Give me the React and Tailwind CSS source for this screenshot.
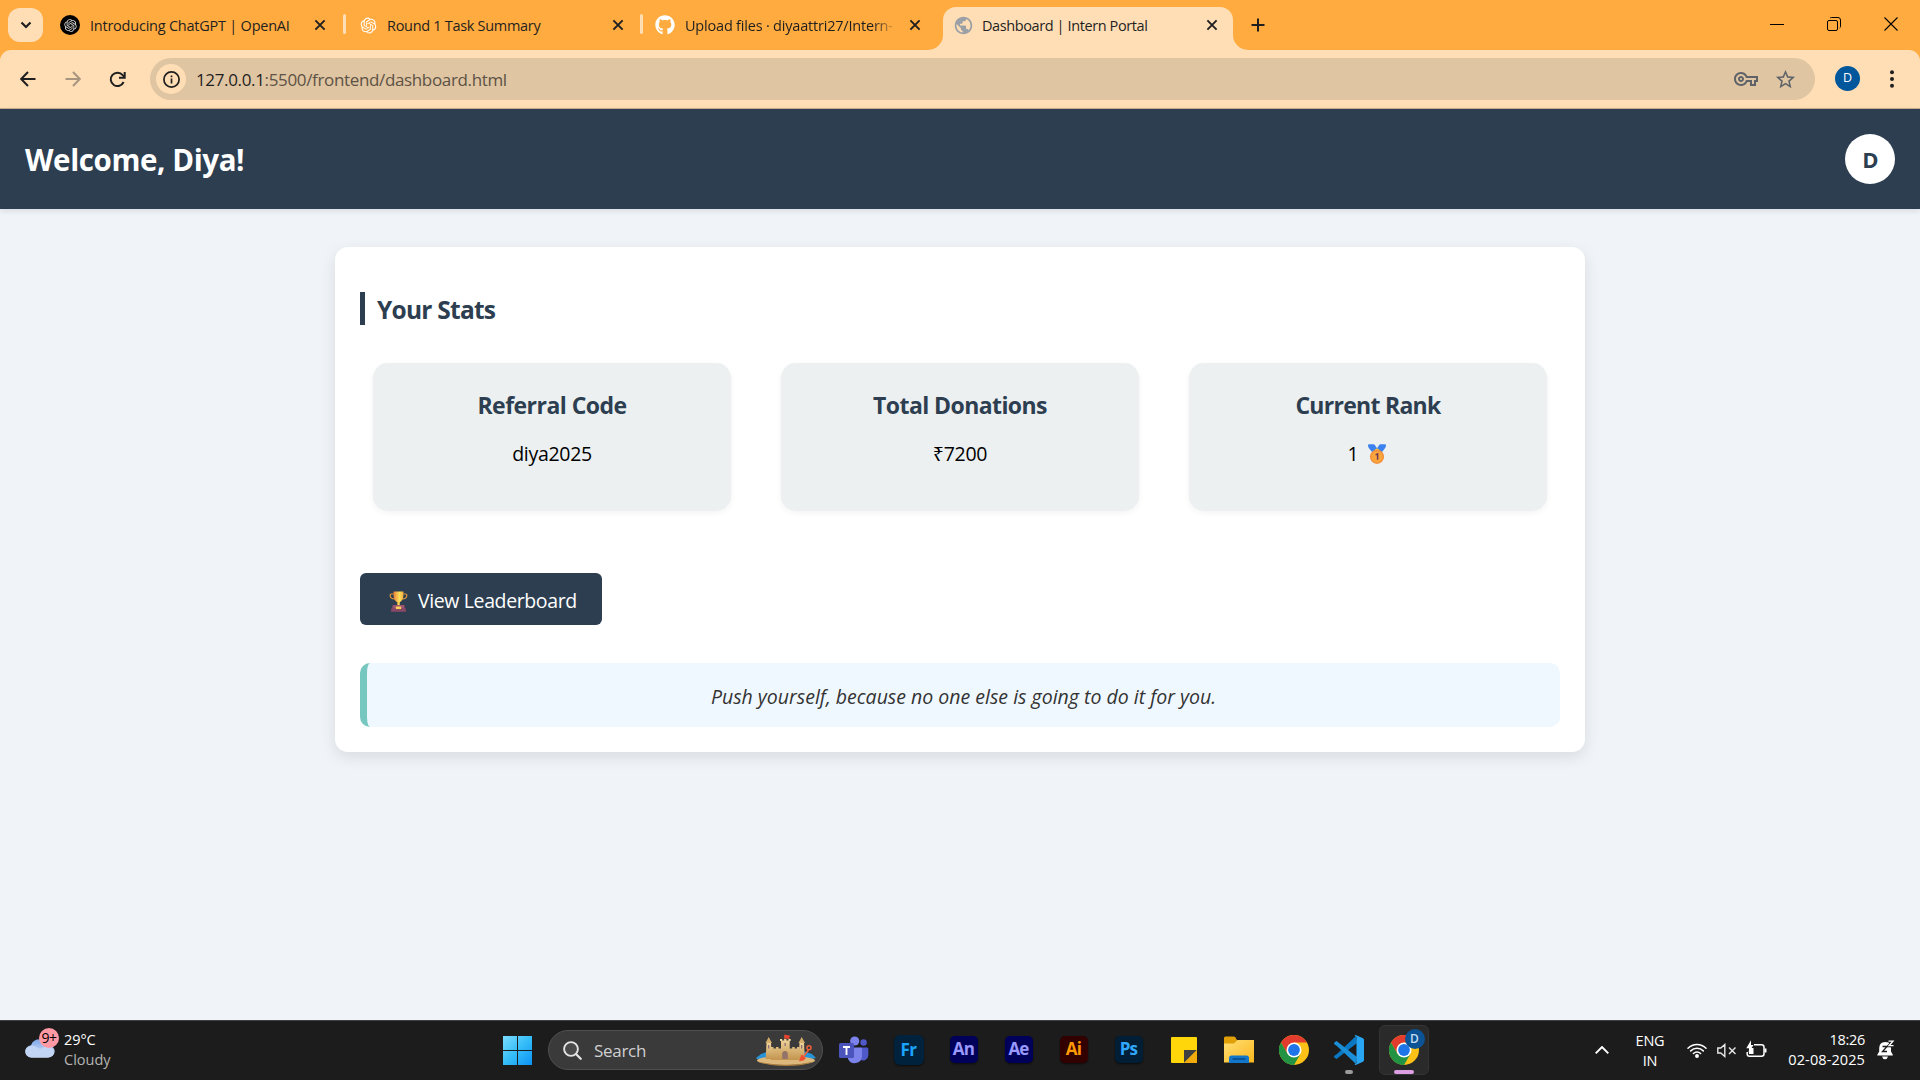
import React from "react";
import { FaGithub } from "react-icons/fa";
import { RiOpenaiFill } from "react-icons/ri";
import { MdPublic, MdStarOutline, MdOutlineVpnKey } from "react-icons/md";

function CloseX() {
  return (
    <svg className="h-3 w-3 shrink-0" viewBox="0 0 12 12" fill="none" stroke="#1f1f1f" strokeWidth="1.9">
      <path d="M1.4 1.4l9.2 9.2M10.6 1.4l-9.2 9.2" />
    </svg>
  );
}

function TabStrip() {
  return (
    <div className="flex h-[50px] items-start bg-[#ffab40] pl-2 text-[14.5px] leading-5 text-[#1f1f1f]">
      <button className="mt-2 flex h-[34px] w-[35px] items-center justify-center rounded-xl bg-[#ffdeb5]">
        <svg className="h-3 w-3" viewBox="0 0 12 12" fill="none" stroke="#1f1f1f" strokeWidth="2.2">
          <path d="M1.5 3.5L6 8l4.500-4.500" />
        </svg>
      </button>

      <div className="flex h-[50px] w-[300px] items-center pr-[17px] pl-[17px]">
        <span className="flex h-5 w-5 shrink-0 items-center justify-center rounded-full bg-black">
          <RiOpenaiFill className="h-[15px] w-[15px] text-[#dcdcdc]" />
        </span>
        <span className="ml-2.5 flex-1 pt-px tracking-[-0.23px] whitespace-nowrap">Introducing ChatGPT | OpenAI</span>
        <CloseX />
      </div>
      <div className="mt-3.5 h-5 w-[3px] rounded-full bg-[#ffdeb5]" />

      <div className="flex h-[50px] w-[294px] items-center pr-4 pl-[13px]">
        <RiOpenaiFill className="h-[19px] w-[19px] shrink-0 text-white" />
        <span className="ml-[9px] flex-1 pt-px tracking-[-0.3px] whitespace-nowrap">Round 1 Task Summary</span>
        <CloseX />
      </div>
      <div className="mt-3.5 h-5 w-[3px] rounded-full bg-[#ffdeb5]" />

      <div className="flex h-[50px] w-[300px] items-center pr-[22px] pl-3">
        <FaGithub className="h-5 w-5 shrink-0 text-white" />
        <span className="mr-4 ml-2.5 w-[208px] overflow-hidden pt-px tracking-[-0.2px] whitespace-nowrap [mask-image:linear-gradient(to_right,black_90%,transparent_102%)]">
          Upload files · diyaattri27/Intern-
        </span>
        <CloseX />
      </div>

      <div className="relative mt-[7px] flex h-[43px] w-[290px] items-center rounded-t-[13px] bg-[#ffdeb5] pr-[15px] pb-[7px] pl-[11px]">
        <svg className="absolute bottom-0 -left-[15px] h-[15px] w-[15px]" viewBox="0 0 15 15">
          <path d="M15 0v15H0A15 15 0 0 0 15 0z" fill="#ffdeb5" />
        </svg>
        <svg className="absolute -right-[15px] bottom-0 h-[15px] w-[15px]" viewBox="0 0 15 15">
          <path d="M0 0v15h15A15 15 0 0 1 0 0z" fill="#ffdeb5" />
        </svg>
        <MdPublic className="h-[21px] w-[21px] shrink-0 -translate-x-px text-[#9aa0a6]" />
        <span className="ml-[7px] flex-1 pt-px tracking-[-0.4px] whitespace-nowrap">Dashboard | Intern Portal</span>
        <CloseX />
      </div>

      <svg className="mt-[18px] ml-[18px] h-3.5 w-3.5" viewBox="0 0 14 14" stroke="#1f1f1f" strokeWidth="2">
        <path d="M7 .5v13M.5 7h13" />
      </svg>

      <div className="mt-[17px] mr-[22px] ml-auto flex gap-[43px]">
        <svg className="h-3.5 w-3.5" viewBox="0 0 14 14" stroke="#000">
          <path d="M0 7.500h14" />
        </svg>
        <svg className="h-3.5 w-3.5" viewBox="0 0 14 14" fill="none" stroke="#000">
          <rect x=".5" y="3.500" width="10" height="10" rx="1.500" />
          <path d="M3 1.200Q3.500.5 4.500.5h6.500a2.500 2.500 0 0 1 2.500 2.500v6.500q0 1-.8 1.400" />
        </svg>
        <svg className="h-3.5 w-3.5" viewBox="0 0 14 14" fill="none" stroke="#000" strokeWidth="1.100">
          <path d="M.5.5l13 13M13.500.5l-13 13" />
        </svg>
      </div>
    </div>
  );
}

function Toolbar() {
  return (
    <div className="bg-[#ffab40]">
      <div className="flex h-[59px] items-center rounded-t-[11px] border-b border-[#c9b08f] bg-[#ffdeb5] pl-5">
        <svg className="h-4 w-4" viewBox="0 0 16 16" fill="none" stroke="#1f1f1f" strokeWidth="2">
          <path d="M15.500 8H1.500M8 1L1.200 8 8 15" />
        </svg>
        <svg className="ml-[29px] h-4 w-4" viewBox="0 0 16 16" fill="none" stroke="#a8957f" strokeWidth="2">
          <path d="M.5 8h14M8 1l6.800 7L8 15" />
        </svg>
        <svg className="ml-7 h-[17px] w-[17px]" viewBox="0 0 17 17" fill="none" stroke="#1f1f1f" strokeWidth="2">
          <path d="M14.600 11A6.700 6.700 0 1 1 13.700 4.200L15.500 6" />
          <path d="M15.700 1v5.700H10" />
        </svg>

        <div className="ml-6 flex h-[42px] w-[1665px] items-center rounded-full bg-[#dfc5a2] pr-[18px] pl-1.5">
          <span className="flex h-[30px] w-[30px] items-center justify-center rounded-full bg-[#ffdeb5]">
            <svg className="h-[17px] w-[17px]" viewBox="0 0 17 17" fill="none" stroke="#1f1f1f">
              <circle cx="8.500" cy="8.500" r="7.600" strokeWidth="1.700" />
              <path d="M8.500 7.600v4.800M8.500 4.400v1.800" strokeWidth="1.700" />
            </svg>
          </span>
          <span className="ml-[10px] pt-px text-[17px] leading-6 tracking-[-0.35px] text-[#5d5245]">
            <span className="text-[#1f1f1f]">127.0.0.1</span>:5500/frontend/dashboard.html
          </span>
          <MdOutlineVpnKey className="ml-auto h-6 w-6 text-[#5f6368]" />
          <MdStarOutline className="ml-4 h-[23px] w-[23px] text-[#5f6368]" />
        </div>

        <span className="mb-px ml-5 flex h-[25px] w-[25px] items-center justify-center rounded-full bg-[#01579b] text-[12.500px] text-white">D</span>
        <svg className="ml-[29px] h-[18px] w-1.5" viewBox="0 0 6 18" fill="#1f1f1f">
          <circle cx="3" cy="2.200" r="2" />
          <circle cx="3" cy="9" r="2" />
          <circle cx="3" cy="15.800" r="2" />
        </svg>
      </div>
    </div>
  );
}

function Medal() {
  return (
    <svg className="mr-0.5 ml-2.5 h-5 w-[18px]" viewBox="0 0 18 20">
      <path d="M0 1.200Q0 .3 1 .3h4.600q.8 0 1.200.7L9 4.300 11.200 1q.4-.7 1.200-.7H17q1 0 1 .9 0 1.800-1.200 3.200L14 8H4L1.200 4.400Q0 3 0 1.200z" fill="#3b82f0" />
      <path d="M5.500 6.500L9 4.300l3.500 2.200z" fill="#fbc23c" />
      <circle cx="9" cy="12.800" r="7.100" fill="#f2913d" />
      <circle cx="9" cy="12.800" r="5.600" fill="#fca53a" />
      <path d="M7.600 10.900l2-1v5.900" fill="none" stroke="#6b3a5b" strokeWidth="1.500" />
    </svg>
  );
}

function Trophy() {
  return (
    <svg className="h-[21px] w-[19px]" viewBox="0 0 19 21">
      <defs>
        <linearGradient id="cup" x1="0" x2="1">
          <stop offset="0" stopColor="#e9823a" />
          <stop offset=".6" stopColor="#fde05a" />
          <stop offset="1" stopColor="#f2a63c" />
        </linearGradient>
      </defs>
      <path d="M4.500 3H2.300Q1 3 1.200 4.800 1.600 8.200 6 8M14.500 3h2.200q1.300 0 1.100 1.800Q17.400 8.200 13 8" fill="none" stroke="#e39a3a" strokeWidth="1.200" />
      <path d="M4.500.5h10v3.300c0 4-1.700 6.700-3.800 7.500v2.500l1.500 1H6.800l1.500-1v-2.500C6.200 10.500 4.500 7.800 4.500 3.800z" fill="url(#cup)" />
      <path d="M3.500 14h12v3.500h-12z" fill="#9c5570" />
      <path d="M2.500 17h14l.6 3.700H1.900z" fill="#8a4868" />
      <rect x="6.800" y="15.500" width="5.400" height="2.500" rx=".6" fill="#fbcf55" />
    </svg>
  );
}

function Stat({ title, tracking, children }) {
  return (
    <div className="h-[148px] flex-1 rounded-[15px] bg-[#ecf0f1] pt-[26px] text-center shadow-[0_2px_6px_rgba(0,0,0,0.05)]">
      <h3 className={"text-[23px] leading-8 font-bold text-[#2c3e50] " + tracking}>{title}</h3>
      <div className="mt-[19px] flex items-center justify-center text-[19.5px] leading-7 tracking-[-0.3px] text-black">{children}</div>
    </div>
  );
}

function Dashboard() {
  return (
    <div className="h-[911px] bg-[#f0f4f8]">
      <header className="flex h-[100px] items-center justify-between bg-[#2c3e50] px-[25px] shadow-[0_2px_6px_rgba(0,0,0,0.1)]">
        <h1 className="pt-0.5 text-[29.500px] leading-10 font-bold tracking-[-0.4px] text-white">Welcome, Diya!</h1>
        <div className="flex h-[50px] w-[50px] items-center justify-center rounded-full bg-white pl-px text-[22px] leading-none font-bold text-[#2c3e50]">D</div>
      </header>

      <main className="mx-auto mt-[38px] h-[505px] w-[1250px] rounded-[13px] bg-white px-[25px] pt-[45px] shadow-[0_5px_15px_rgba(0,0,0,0.1)]">
        <h2 className="h-[33px] border-l-[5px] border-[#2c3e50] pt-0.5 pl-[12px] text-[24.500px] leading-8 font-bold tracking-[-0.75px] text-[#2c3e50]">Your Stats</h2>
        <section className="mx-[13px] mt-[38px] flex gap-[50px]">
          <Stat title="Referral Code" tracking="tracking-[-0.54px]">diya2025</Stat>
          <Stat title="Total Donations" tracking="tracking-[-0.58px]">₹7200</Stat>
          <Stat title="Current Rank" tracking="tracking-[-0.72px]">1<Medal /></Stat>
        </section>
        <button className="mt-[62px] flex h-[52px] w-[242px] items-center rounded-md bg-[#2c3e50] pt-1 pl-[29px] text-[19.500px] leading-7 tracking-[-0.38px] whitespace-nowrap text-white">
          <Trophy />
          <span className="ml-2.5">View Leaderboard</span>
        </button>
        <blockquote className="mt-[38px] flex h-[64px] items-center justify-center rounded-[10px] border-l-[7px] border-[#76c7c0] bg-[#f0f8ff] pt-[3px] text-[19.500px] leading-7 text-[#333] italic">
          Push yourself, because no one else is going to do it for you.
        </blockquote>
      </main>
    </div>
  );
}

function Castle() {
  return (
    <svg className="h-[32px] w-[60px]" viewBox="0 0 60 32">
      <defs>
        <linearGradient id="sand" x1="0" y1="0" x2="0" y2="1">
          <stop offset="0" stopColor="#efd59c" />
          <stop offset="1" stopColor="#c4954f" />
        </linearGradient>
      </defs>
      <path d="M0 24l5-4 8-3v10L1 25zM60 24l-4-4-9-3v10z" fill="#2793d8" />
      <ellipse cx="30" cy="26.500" rx="29" ry="4.500" fill="#dcb87c" />
      <path d="M1.500 27.500Q30 34 58.500 27.500 48 32 30 32T1.500 27.500z" fill="#a77b3f" />
      <path d="M28.500 1v6" stroke="#8b5c35" />
      <path d="M28.500.5l6 1.200-1.500 1.500 1 1.800-5.500-.5z" fill="#e8412e" />
      <path d="M15 14.500V13h2.500v1.500H20V13h2.500v1.500H25V7H24V5h2.200v1.500h2V5h2.200v1.500h2V5h2.300v2h-1v7.500h2.500V13h2.500v1.500H41V13h2.500v13H15z" fill="url(#sand)" />
      <path d="M10.500 8.500h4.500L15.800 25H9.700zM43.500 8.500H48l.8 16.500h-6.100z" fill="url(#sand)" />
      <path d="M9.500 9l3.200-6L16 9zM42.500 9l3.200-6L49 9z" fill="#d5ae6c" />
      <path d="M26.200 25v-5q0-3 2.800-3t2.800 3v5z" fill="#94736a" />
      <path d="M12 11h1.300v3.500H12zM45 11h1.300v3.500H45zM28.500 9h1.300v3h-1.300z" fill="#8f6c7c" />
      <path d="M52.500 16l-4.500 6" stroke="#f0603a" strokeWidth="1.600" />
      <circle cx="53" cy="13.800" r="2" fill="none" stroke="#f0603a" strokeWidth="1.500" />
      <path d="M45.500 20.500l4.500 3.500-2.500 2.500-4.500.8z" fill="#f0502e" />
    </svg>
  );
}

function Chrome() {
  return (
    <svg className="h-[30px] w-[30px]" viewBox="0 0 30 30">
      <circle cx="15" cy="15" r="15" fill="#fbc116" />
      <path d="M15 0A15 15 0 0 1 28 7.500H15L8.500 18.750 2 7.500A15 15 0 0 1 15 0z" fill="#e33b2e" />
      <path d="M2 7.500A15 15 0 0 0 15 30L21.500 18.750H8.500z" fill="#229342" />
      <circle cx="15" cy="15" r="7.500" fill="#fff" />
      <circle cx="15" cy="15" r="5.900" fill="#1f75e8" />
    </svg>
  );
}

function Slot({ children }) {
  return <div className="relative flex h-[60px] w-[55px] items-center justify-center">{children}</div>;
}

function Adobe({ cls, children }) {
  return (
    <span className={"flex items-center justify-center font-bold shadow-[0_1px_2px_rgba(0,0,0,0.6)] " + cls}>{children}</span>
  );
}

function Taskbar() {
  return (
    <footer className="flex h-[60px] items-center bg-[#1c1c1c] shadow-[inset_0_1px_0_#3f4142] text-[14.500px] leading-5 text-white">
      <div className="flex w-[503px] items-center pl-[25px]">
        <div className="relative mb-[14px] h-[30px] w-[36px]">
          <svg className="absolute top-[9px] left-0 h-[21px] w-[30px]" viewBox="0 0 30 23" preserveAspectRatio="none">
            <defs>
              <linearGradient id="cloud" x1="0" y1="0" x2="0" y2="1">
                <stop offset="0" stopColor="#7fa6e6" />
                <stop offset="1" stopColor="#dce7fb" />
              </linearGradient>
            </defs>
            <path d="M6 9A9.500 9.500 0 0 1 24 9a6.800 6.800 0 0 1-1 13.500H6.500A6.800 6.800 0 0 1 6 9z" fill="url(#cloud)" />
            <path d="M1.500 12q5-5 10-1 3 2.500 5 1.500 6-5 11 0 3 4 0 8-2 2-4.500 2H6.500Q2 22 .7 18 0 14 1.500 12z" fill="#c3d5f5" />
          </svg>
          <span className="absolute top-0 left-[14px] flex h-5 w-5 items-center justify-center rounded-full bg-[#ff99a4] text-[14px] tracking-[-0.5px] text-black">9+</span>
        </div>
        <div className="ml-[3px]">
          <div className="tracking-[-0.1px]">29°C</div>
          <div className="text-[#b4b4b4]">Cloudy</div>
        </div>
      </div>

      <svg className="h-[29px] w-[29px]" viewBox="0 0 29 29">
        <defs>
          <linearGradient id="win" gradientUnits="userSpaceOnUse" x1="0" y1="0" x2="29" y2="29">
            <stop offset="0" stopColor="#7ddcff" />
            <stop offset=".5" stopColor="#35bdf8" />
            <stop offset="1" stopColor="#0c93f5" />
          </linearGradient>
        </defs>
        <path d="M0 0h14v14H0zM15 0h14v14H15zM0 15h14v14H0zM15 15h14v14H15z" fill="url(#win)" />
      </svg>

      <div className="ml-4 flex h-10 w-[275px] items-center rounded-full border border-[#505050] bg-[#3a3a3a] pr-[6px] pl-3.5">
        <svg className="h-[19px] w-[19px]" viewBox="0 0 19 19" fill="none" stroke="#e4e4e4" strokeLinecap="round">
          <circle cx="8" cy="8" r="6.900" fill="#4a4a4a" strokeWidth="1.900" />
          <path d="M13.200 13.200l4.500 4.500" strokeWidth="2.300" />
        </svg>
        <span className="ml-3 pt-0.5 text-[17px] tracking-[-0.3px] text-[#d0d0d0]">Search</span>
        <div className="ml-auto"><Castle /></div>
      </div>

      <div className="ml-[3px] flex">
        <Slot>
          <svg className="h-[28px] w-[30px]" viewBox="0 0 30 28">
            <circle cx="24.600" cy="6.500" r="3.200" fill="#5059c9" />
            <path d="M21 11.500h6.800q1.500 0 1.500 1.500v6.500a5.200 5.200 0 0 1-8.300 4z" fill="#5059c9" />
            <circle cx="15.700" cy="5" r="4.600" fill="#7b83eb" />
            <path d="M9 11.500h12.500q1.500 0 1.500 1.500v7.500a7.400 7.400 0 0 1-14 2.500z" fill="#7b83eb" />
            <rect y="7" width="15" height="15" rx="1.500" fill="#4b53bc" />
            <path d="M4 11h7M7.500 11v8" stroke="#fff" strokeWidth="1.900" />
          </svg>
        </Slot>
        <Slot><Adobe cls="h-[30px] w-[30px] rounded-[6px] bg-[#00223c] text-[17px] text-[#1ba4ff] tracking-[-0.6px]">Fr</Adobe></Slot>
        <Slot><Adobe cls="-mt-[2px] h-[27px] w-[28px] rounded-[5px] bg-[#00005b] pb-px text-[17px] text-[#9999ff] tracking-[-0.8px]">An</Adobe></Slot>
        <Slot><Adobe cls="-mt-[2px] h-[27px] w-[28px] rounded-[5px] bg-[#00005b] pb-px text-[17px] text-[#9999ff] tracking-[-0.8px]">Ae</Adobe></Slot>
        <Slot><Adobe cls="-mt-[2px] h-[27px] w-[28px] rounded-[5px] bg-[#330000] pb-px text-[17px] text-[#ff9a00] tracking-[-0.8px]">Ai</Adobe></Slot>
        <Slot><Adobe cls="-mt-[2px] h-[27px] w-[28px] rounded-[5px] bg-[#001e36] pb-px text-[17px] text-[#31a8ff] tracking-[-0.8px]">Ps</Adobe></Slot>
        <Slot>
          <svg className="h-[26px] w-[26px]" viewBox="0 0 26 26">
            <rect width="26" height="26" rx="1" fill="#ffd60a" />
            <path d="M13 13h13L13 26z" fill="#404040" />
            <path d="M26 13v12q0 1-1 1H13z" fill="#f2ab0c" />
          </svg>
        </Slot>
        <Slot>
          <svg className="h-[28px] w-[30px]" viewBox="0 0 30 28">
            <defs>
              <linearGradient id="folder" x1="0" y1="0" x2="1" y2="1">
                <stop offset="0" stopColor="#ffdf75" />
                <stop offset="1" stopColor="#fbb71d" />
              </linearGradient>
            </defs>
            <path d="M0 2Q0 .5 1.500.5h8q1 0 1.700.7L13 4v6H0z" fill="#e2a008" />
            <path d="M0 7.500h10L13.500 4H30v22.500H0z" fill="url(#folder)" />
            <path d="M5 27v-5q0-2.500 2.500-2.500h15Q25 19.500 25 22v5z" fill="#1277cb" />
            <path d="M8.500 23h13" stroke="#0a4a86" strokeWidth="1.500" />
          </svg>
        </Slot>
        <Slot><Chrome /></Slot>
        <Slot>
          <svg className="h-[30px] w-[30px]" viewBox="0 0 30 30">
            <path d="M22 0L3.200 17.700.4 19.800q-.8.8 0 1.600l1.300 1.200q.7.600 1.500 0L23 7z" fill="#0a78c2" transform="translate(0 1)" />
            <path d="M22 30L3.200 12.300l-2.800-2.100q-.8-.8 0-1.600l1.300-1.200q.7-.6 1.500 0L23 23z" fill="#1a8fd8" transform="translate(0 -1)" />
            <path d="M22.300.2L29 3.300q1 .5 1 1.600v20.200q0 1.100-1 1.600l-6.700 3.100q-1 .4-1.800-.3L22.500 28V2L20.500.5q.8-.7 1.800-.3z" fill="#28a5f3" />
          </svg>
          <span className="absolute bottom-[6px] left-[23.500px] h-1 w-2 rounded-full bg-[#9a9a9a]" />
        </Slot>
        <Slot>
          <div className="relative flex h-[50px] w-[50px] items-center justify-center rounded-md border border-[#343434] bg-[#2a2a2a]">
            <Chrome />
            <span className="absolute top-[3px] right-[3px] flex h-5 w-5 items-center justify-center rounded-full bg-[#0b5394] text-[12px] font-semibold text-[#c5dcf2]">D</span>
            <span className="absolute bottom-0 left-[14px] h-1 w-5 rounded-full bg-[#dd9fe3]" />
          </div>
        </Slot>
      </div>

      <div className="mr-[25px] ml-auto flex items-center">
        <svg className="h-[8px] w-[14px]" viewBox="0 0 14 8" fill="none" stroke="#fff" strokeWidth="1.900">
          <path d="M.7 7.300L7 1l6.300 6.300" />
        </svg>
        <div className="ml-[26px] w-[30px] pt-px text-center tracking-[-0.2px]">
          <div>ENG</div>
          <div>IN</div>
        </div>
        <svg className="ml-[22px] h-[15px] w-[20px]" viewBox="0 0 20 15" fill="none" stroke="#fff" strokeWidth="1.500" strokeLinecap="round">
          <path d="M1 5.200a12.700 12.700 0 0 1 18 0M3.700 7.900a8.900 8.900 0 0 1 12.600 0M6.400 10.500a5.100 5.100 0 0 1 7.200 0" />
          <circle cx="10" cy="13" r="1.200" fill="#fff" />
        </svg>
        <svg className="ml-[10px] h-[15px] w-[20px]" viewBox="0 0 20 15" fill="none" stroke="#e8e8e8" strokeWidth="1.400">
          <path d="M.8 5v5h3l4 3.500v-12L3.800 5zM12 4.500l6.500 6.500M18.500 4.500L12 11" />
        </svg>
        <svg className="-mt-0.5 ml-[9px] h-[18px] w-[21px]" viewBox="0 0 21 18" fill="none" stroke="#fff" strokeWidth="1.500">
          <path d="M8 4.800h7.500q2.500 0 2.500 2.500v6.500q0 2.500-2.500 2.500H3.500Q1.200 16.300 1.200 14v-2" />
          <path d="M19.500 8.500v4" strokeWidth="2" />
          <path d="M3 8h4.500v6H3z" fill="#fff" stroke="none" />
          <path d="M5 .3L.3 8.200h3L2.500 12.800 7.500 5H5z" fill="#fff" stroke="none" />
        </svg>
        <div className="ml-[20px] w-[78px] text-right whitespace-nowrap">
          <div className="tracking-[-0.3px]">18:26</div>
          <div className="tracking-[0.1px]">02-08-2025</div>
        </div>
        <svg className="ml-[12px] h-[20px] w-[18px]" viewBox="0 0 18 20">
          <path d="M8 2Q2.500 2 2.200 8v3.500L.3 14.800v.7h15.500v-.7L14 11.500V8L12 2.400z" fill="#fff" />
          <path d="M5 16.500h6q-.7 2.700-3 2.700t-3-2.700z" fill="#fff" />
          <path d="M5.500 6.500h4.500l-4.500 5h4.500" fill="none" stroke="#1c1c1c" strokeWidth="1.300" />
          <path d="M11.500 1.200h4.500l-4 4.500h4.500" fill="none" stroke="#1c1c1c" strokeWidth="3" />
          <path d="M11.500 1.200h4.500l-4 4.500h4.500" fill="none" stroke="#fff" strokeWidth="1.300" />
        </svg>
      </div>
    </footer>
  );
}

export default function App() {
  return (
    <div className="h-[1080px] w-[1920px] overflow-hidden font-['Open_Sans','Noto_Sans',sans-serif]">
      <TabStrip />
      <Toolbar />
      <Dashboard />
      <Taskbar />
    </div>
  );
}
